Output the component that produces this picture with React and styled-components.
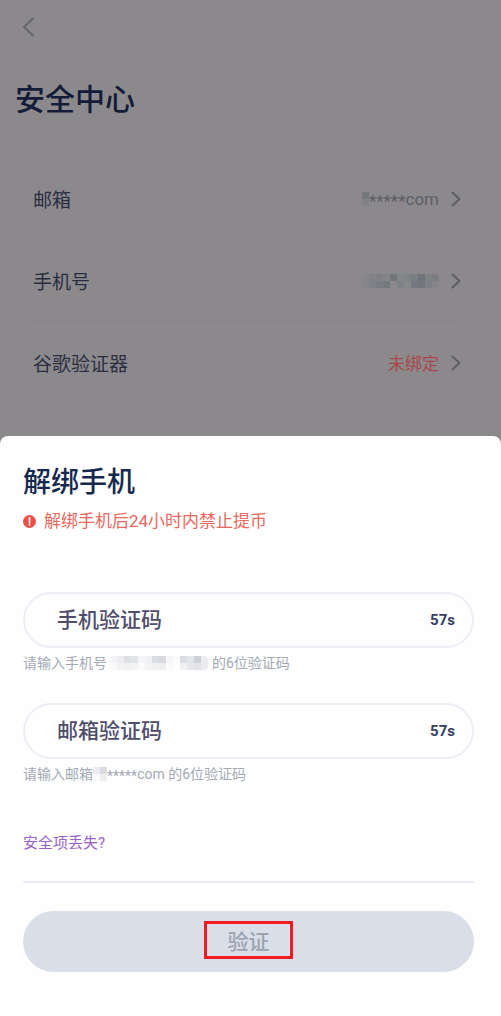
import React, { useState } from 'react';
import styled, { createGlobalStyle } from 'styled-components';

const GlobalStyle = createGlobalStyle`
    * {
        box-sizing: border-box;
    }
    body {
        margin: 0;
        background: #8c898c;
        font-family: Roboto, 'Noto Sans CJK SC', sans-serif;
    }
    button, input {
        font-family: inherit;
    }
`;

const Page = styled.div`
    min-height: 100vh;
    display: flex;
    flex-direction: column;
    background: #8c898c;
`;

const Header = styled.header`
    padding: 12px 15px 0;
`;

const BackButton = styled.button`
    display: flex;
    align-items: center;
    padding: 0 6px;
    height: 30px;
    border: none;
    background: none;
    color: #63676a;
    cursor: pointer;
`;

const PageTitle = styled.h1`
    margin: 36px 0 0;
    font-size: 30px;
    line-height: 44px;
    font-weight: 500;
    color: #131c38;
`;

const List = styled.ul`
    list-style: none;
    margin: 0;
    padding: 36px 40px 32px 33px;
`;

const Item = styled.li`
    border-bottom: 1px solid ${({ $line }) => ($line ? '#878488' : 'transparent')};
`;

const ItemButton = styled.button`
    width: 100%;
    height: 81px;
    display: flex;
    align-items: center;
    padding: 0;
    border: none;
    background: none;
    cursor: pointer;
`;

const ItemLabel = styled.span`
    flex: 1;
    text-align: left;
    font-size: 19px;
    color: #2a2e42;
`;

const ItemValue = styled.span`
    display: flex;
    align-items: center;
    margin-right: 12px;
    font-size: 17px;
    color: ${({ $warn }) => ($warn ? '#a8474b' : '#5c5f66')};
`;

const Stars = styled.span`
    padding-top: 4px;
    line-height: 18px;
`;

const Sheet = styled.section`
    flex: 1;
    padding: 25px 27px 44px 23px;
    border-radius: 8px 8px 0 0;
    background: #fefefe;
`;

const SheetTitle = styled.h2`
    margin: 0;
    font-size: 28px;
    line-height: 44px;
    font-weight: 500;
    color: #15294f;
`;

const Warning = styled.p`
    display: flex;
    align-items: center;
    gap: 8px;
    margin: 4px 0 59px;
    font-size: 17px;
    line-height: 24px;
    color: #e8695f;
`;

const Field = styled.div`
    margin-bottom: 29px;
`;

const InputBox = styled.div`
    display: flex;
    align-items: center;
    height: 56px;
    padding: 0 17px 0 32px;
    border: 2px solid #efecf5;
    border-radius: 28px;
`;

const CodeInput = styled.input`
    flex: 1;
    min-width: 0;
    padding: 0;
    border: none;
    outline: none;
    background: none;
    font-size: 21px;
    font-weight: 500;
    color: #504d6b;
    &::placeholder {
        color: #504d6b;
        opacity: 1;
    }
`;

const Countdown = styled.button`
    padding: 0;
    border: none;
    background: none;
    font-size: 15px;
    font-weight: 700;
    color: #353f63;
`;

const Hint = styled.p`
    display: flex;
    align-items: center;
    margin: 4px 0 0;
    font-size: 14px;
    line-height: 22px;
    white-space: pre;
    color: #a3a9b4;
`;

const LostLink = styled.a`
    display: inline-block;
    margin-top: 17px;
    font-size: 15px;
    line-height: 24px;
    color: #9a62c8;
    text-decoration: none;
`;

const Divider = styled.hr`
    margin: 26px 0 28px;
    border: none;
    border-top: 2px solid #ebebf4;
`;

const SubmitButton = styled.button`
    width: 100%;
    height: 61px;
    display: flex;
    align-items: center;
    justify-content: center;
    padding: 0 0 4px;
    border: none;
    border-radius: 31px;
    background: #dadee8;
    color: #9ca3b1;
`;

const Highlight = styled.span`
    width: 89px;
    height: 38px;
    display: flex;
    align-items: center;
    justify-content: center;
    border: 3px solid #f01c22;
    font-size: 21px;
    font-weight: 500;
`;

const Tiles = styled.span`
    display: grid;
    grid-template-columns: repeat(${({ $cols }) => $cols}, 7px);
    grid-auto-rows: 7px;
    overflow: hidden;
    border-radius: ${({ $cols }) => ($cols > 2 ? '4px' : '0')};
`;

const Tile = styled.span`
    background: ${({ $color }) => $color};
`;

const Mask = ({ cols, colors }) => (
    <Tiles $cols={cols} aria-hidden="true">
        {colors.map((color, i) => <Tile key={i} $color={color} />)}
    </Tiles>
)

const Arrow = () => (
    <svg width="10" height="16" viewBox="0 0 10 16" fill="none" stroke="#5e5e62" strokeWidth="2" strokeLinecap="round" strokeLinejoin="round">
        <path d="M1.5 1.5 8.5 8 1.5 14.5" />
    </svg>
)

const BackIcon = () => (
    <svg width="14" height="20" viewBox="0 0 14 20" fill="none" stroke="currentColor" strokeWidth="2" strokeLinecap="round" strokeLinejoin="round">
        <path d="M12 1.5 3 10l9 8.5" />
    </svg>
)

const AlertIcon = () => (
    <svg width="13" height="13" viewBox="0 0 13 13">
        <circle cx="6.5" cy="6.5" r="6.5" fill="#f04f46" />
        <path d="M6.5 3v4.2M6.5 9.2v.6" stroke="#fff" strokeWidth="1.8" strokeLinecap="round" />
    </svg>
)

const emailMask = ['#73777b', '#828286'];

const phoneMask = [
    '#85878b', '#818387', '#7f7f86', '#858488', '#727579', '#858689', '#808488', '#7b7f84', '#6f737a', '#7d8085', '#7a7e83',
    '#858588', '#7d8085', '#7b7b82', '#76797c', '#8a888b', '#7f8287', '#88878a', '#767a80', '#73767d', '#7c7f84', '#858589',
];

const phoneHintMask = [
    '#f4f4f6', '#eeeef1', '#dfe0e5', '#e3e4e8', '#f6f6f8', '#f1f1f4', '#dddee3', '#d8d9df', '#f6f6f8', '#fafafb', '#dcdde2', '#e4e5e9', '#cfd1d8', '#ececf0',
    '#fafafb', '#f3f3f5', '#f1f1f4', '#f4f4f6', '#fbfbfc', '#f4f4f6', '#f1f1f4', '#eeeef1', '#fafafb', '#fefefe', '#f1f1f4', '#e6e7eb', '#e3e4e8', '#ececf0',
];

const emailHintMask = [
    '#ececef', '#d9dbdf',
    '#fafafb', '#efeff2',
];

const App = () => {
    const [phoneCode, setPhoneCode] = useState('');
    const [emailCode, setEmailCode] = useState('');

    return (
        <Page>
            <GlobalStyle />
            <Header>
                <BackButton aria-label="返回"><BackIcon /></BackButton>
                <PageTitle>安全中心</PageTitle>
            </Header>
            <List>
                <Item>
                    <ItemButton>
                        <ItemLabel>邮箱</ItemLabel>
                        <ItemValue><Mask cols={1} colors={emailMask} /><Stars>*****</Stars>com</ItemValue>
                        <Arrow />
                    </ItemButton>
                </Item>
                <Item $line>
                    <ItemButton>
                        <ItemLabel>手机号</ItemLabel>
                        <ItemValue><Mask cols={11} colors={phoneMask} /></ItemValue>
                        <Arrow />
                    </ItemButton>
                </Item>
                <Item>
                    <ItemButton>
                        <ItemLabel>谷歌验证器</ItemLabel>
                        <ItemValue $warn>未绑定</ItemValue>
                        <Arrow />
                    </ItemButton>
                </Item>
            </List>
            <Sheet>
                <SheetTitle>解绑手机</SheetTitle>
                <Warning><AlertIcon />解绑手机后24小时内禁止提币</Warning>
                <Field>
                    <InputBox>
                        <CodeInput aria-label="手机验证码" placeholder="手机验证码" value={phoneCode} onChange={e => setPhoneCode(e.target.value)} />
                        <Countdown disabled>57s</Countdown>
                    </InputBox>
                    <Hint>请输入手机号 <Mask cols={14} colors={phoneHintMask} /> 的6位验证码</Hint>
                </Field>
                <Field>
                    <InputBox>
                        <CodeInput aria-label="邮箱验证码" placeholder="邮箱验证码" value={emailCode} onChange={e => setEmailCode(e.target.value)} />
                        <Countdown disabled>57s</Countdown>
                    </InputBox>
                    <Hint>请输入邮箱<Mask cols={2} colors={emailHintMask} /><Stars>*****</Stars>com 的6位验证码</Hint>
                </Field>
                <LostLink href="#lost">安全项丢失?</LostLink>
                <Divider />
                <SubmitButton disabled><Highlight>验证</Highlight></SubmitButton>
            </Sheet>
        </Page>
    )
}

export default App;
